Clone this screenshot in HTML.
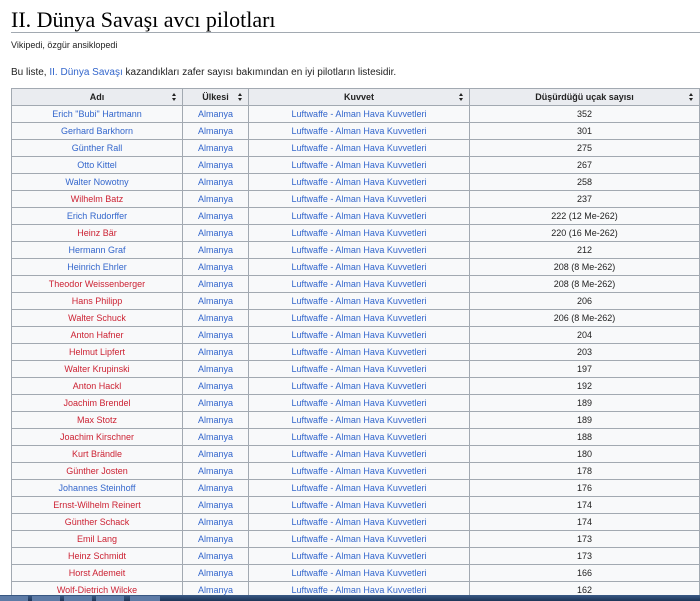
<!DOCTYPE html>
<html><head><meta charset="utf-8"><style>
html,body{margin:0;padding:0;width:700px;height:601px;overflow:hidden;background:#fff;font-family:"Liberation Sans",Arial,sans-serif;}
h1{position:absolute;left:11px;top:7px;margin:0;font-family:"Liberation Serif",serif;font-weight:normal;font-size:22px;color:#000;}
.hr{position:absolute;left:11px;top:32px;width:689px;height:1px;background:#a2a9b1;}
.sub{position:absolute;left:11px;top:40px;font-size:9px;color:#222;}
.intro{position:absolute;left:11px;top:67px;font-size:10px;color:#222;}
a{color:#3366cc;text-decoration:none}
table{position:absolute;left:11px;top:88px;border-collapse:collapse;font-size:9px;table-layout:fixed;}
td,th{border:1px solid #a2a9b1;height:16px;padding:0;text-align:center;background:#f8f9fa;color:#222;white-space:nowrap;overflow:hidden;line-height:16px}
th{background:#eaecf0;font-weight:bold;position:relative;}
th span{position:absolute;right:5px;top:4px;width:5px;height:9px;}
th span:before{content:"";position:absolute;left:0;top:0;border-left:2.5px solid transparent;border-right:2.5px solid transparent;border-bottom:3.5px solid #222;}
th span:after{content:"";position:absolute;left:0;top:5px;border-left:2.5px solid transparent;border-right:2.5px solid transparent;border-top:3.5px solid #222;}
.b{color:#3366cc}.r{color:#cc2233}
.tb{position:absolute;left:0;top:595px;width:700px;height:6px;background:linear-gradient(#3a5a86,#1d3557);}
.tb i{position:absolute;top:1px;height:5px;background:#5d7ba6;}
</style></head><body>
<h1>II. Dünya Savaşı avcı pilotları</h1>
<div class="hr"></div>
<div class="sub">Vikipedi, özgür ansiklopedi</div>
<div class="intro">Bu liste, <a>II. Dünya Savaşı</a> kazandıkları zafer sayısı bakımından en iyi pilotların listesidir.</div>
<table>
<colgroup><col style="width:171px"><col style="width:66px"><col style="width:221px"><col style="width:230px"></colgroup>
<tr><th>Adı<span></span></th><th>Ülkesi<span></span></th><th>Kuvvet<span></span></th><th>Düşürdüğü uçak sayısı<span></span></th></tr>
<tbody id="tb"></tbody>
</table>
<script>
var d=[["Erich \"Bubi\" Hartmann","b","352"],["Gerhard Barkhorn","b","301"],["Günther Rall","b","275"],["Otto Kittel","b","267"],["Walter Nowotny","b","258"],["Wilhelm Batz","r","237"],["Erich Rudorffer","b","222 (12 Me-262)"],["Heinz Bär","r","220 (16 Me-262)"],["Hermann Graf","b","212"],["Heinrich Ehrler","b","208 (8 Me-262)"],["Theodor Weissenberger","r","208 (8 Me-262)"],["Hans Philipp","r","206"],["Walter Schuck","r","206 (8 Me-262)"],["Anton Hafner","r","204"],["Helmut Lipfert","r","203"],["Walter Krupinski","r","197"],["Anton Hackl","r","192"],["Joachim Brendel","r","189"],["Max Stotz","r","189"],["Joachim Kirschner","r","188"],["Kurt Brändle","r","180"],["Günther Josten","r","178"],["Johannes Steinhoff","b","176"],["Ernst-Wilhelm Reinert","r","174"],["Günther Schack","r","174"],["Emil Lang","r","173"],["Heinz Schmidt","r","173"],["Horst Ademeit","r","166"],["Wolf-Dietrich Wilcke","r","162"]];
var h="";d.forEach(function(x){h+='<tr><td class="'+x[1]+'">'+x[0].replace(/"/g,'&quot;')+'</td><td class="b">Almanya</td><td class="b">Luftwaffe - Alman Hava Kuvvetleri</td><td>'+x[2]+'</td></tr>';});
document.getElementById("tb").innerHTML=h;
</script>
<div class="tb"><i style="left:0;width:28px"></i><i style="left:32px;width:28px"></i><i style="left:64px;width:28px"></i><i style="left:96px;width:28px"></i><i style="left:130px;width:30px"></i></div>
</body></html>
